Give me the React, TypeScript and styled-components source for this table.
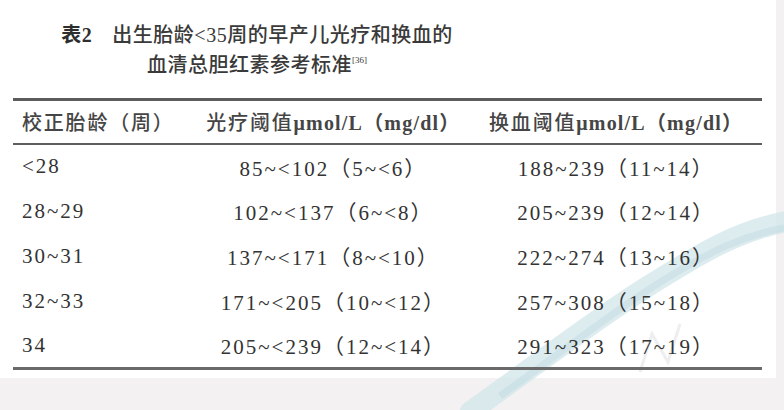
import React from 'react';
import styled, { createGlobalStyle } from 'styled-components';

const GlobalStyle = createGlobalStyle`
  html, body {
    margin: 0;
    padding: 0;
    background: #f3f1f1;
  }
`;

const serif = `"Liberation Serif", "Noto Sans CJK SC", serif`;

const Page = styled.div`
  position: relative;
  width: 784px;
  height: 410px;
  overflow: hidden;
  background: #f3f1f1;
  font-family: ${serif};
`;

const Sheet = styled.div`
  width: 776px;
  height: 378px;
  background: #fff;
  box-sizing: border-box;
  padding: 20px 0 0 13px;
  display: flex;
  flex-direction: column;
`;

const Caption = styled.div`
  position: relative;
  z-index: 1;
  width: 488px;
  text-align: center;
  color: #3a3a3a;
  font-size: 20px;
  line-height: 30px;
  letter-spacing: 0.5px;
  font-weight: 500;
`;

const Label = styled.span`
  font-weight: 700;
  color: #2e2e2e;
  margin-right: 20px;
`;

const Ref = styled.sup`
  font-size: 9px;
  line-height: 0;
  vertical-align: 9px;
  letter-spacing: 0;
`;

const Table = styled.table`
  position: relative;
  z-index: 1;
  margin-top: 18px;
  width: 749px;
  border-collapse: collapse;
  border-top: 3px solid #5c5c5c;
  border-bottom: 3px solid #6a6a6a;
  color: #333;
  font-size: 21px;
  letter-spacing: 2px;
`;

const HeadRow = styled.tr`
  height: 44px;
  border-bottom: 2px solid #5e5e5e;
  color: #454545;
  font-size: 20px;
`;

const Row = styled.tr`
  height: 45px;
`;

const Cell = styled.td<{ $w: number; $left?: boolean }>`
  width: ${(p) => p.$w}px;
  padding: 0 0 0 ${(p) => (p.$left ? 9 : 0)}px;
  text-align: ${(p) => (p.$left ? 'left' : 'center')};
  vertical-align: middle;
  white-space: nowrap;
`;

const HeadCell = styled(Cell).attrs({ as: 'th' })`
  font-weight: 500;
  letter-spacing: 1.8px;
`;

const Unit = styled.span`
  font-weight: 700;
  letter-spacing: 1.2px;
`;

const Watermark = styled.svg`
  position: absolute;
  left: 0;
  top: 0;
  z-index: 0;
  pointer-events: none;
`;

const widths = [177, 276, 296];

const rows: string[][] = [
  ['<28', '85~<102（5~<6）', '188~239（11~14）'],
  ['28~29', '102~<137（6~<8）', '205~239（12~14）'],
  ['30~31', '137~<171（8~<10）', '222~274（13~16）'],
  ['32~33', '171~<205（10~<12）', '257~308（15~18）'],
  ['34', '205~<239（12~<14）', '291~323（17~19）'],
];

export default function App() {
  return (
    <Page>
      <GlobalStyle />
      <Watermark width="784" height="410" viewBox="0 0 784 410">
        <path
          d="M470 412 C 540 362, 600 316, 650 285 S 735 232, 784 222"
          fill="none"
          stroke="#d0e5e9"
          strokeWidth="21"
          strokeLinecap="round"
          opacity="0.75"
        />
        <path
          d="M500 396 C 565 350, 612 312, 662 281 S 742 236, 784 228"
          fill="none"
          stroke="#bed9df"
          strokeWidth="7"
          opacity="0.45"
        />
        <path
          d="M640 372 L 652 334 L 668 362 L 680 324"
          fill="none"
          stroke="#dedede"
          strokeWidth="3"
          opacity="0.5"
        />
      </Watermark>
      <Sheet>
        <Caption>
          <div>
            <Label>表2</Label>出生胎龄&lt;35周的早产儿光疗和换血的
          </div>
          <div>
            血清总胆红素参考标准<Ref>[36]</Ref>
          </div>
        </Caption>
        <Table>
          <thead>
            <HeadRow>
              <HeadCell $w={widths[0]} $left>
                校正胎龄（周）
              </HeadCell>
              <HeadCell $w={widths[1]}>
                光疗阈值<Unit>μmol/L（mg/dl）</Unit>
              </HeadCell>
              <HeadCell $w={widths[2]}>
                换血阈值<Unit>μmol/L（mg/dl）</Unit>
              </HeadCell>
            </HeadRow>
          </thead>
          <tbody>
            {rows.map((r) => (
              <Row key={r[0]}>
                <Cell $w={widths[0]} $left>
                  {r[0]}
                </Cell>
                <Cell $w={widths[1]}>{r[1]}</Cell>
                <Cell $w={widths[2]}>{r[2]}</Cell>
              </Row>
            ))}
          </tbody>
        </Table>
      </Sheet>
    </Page>
  );
}
